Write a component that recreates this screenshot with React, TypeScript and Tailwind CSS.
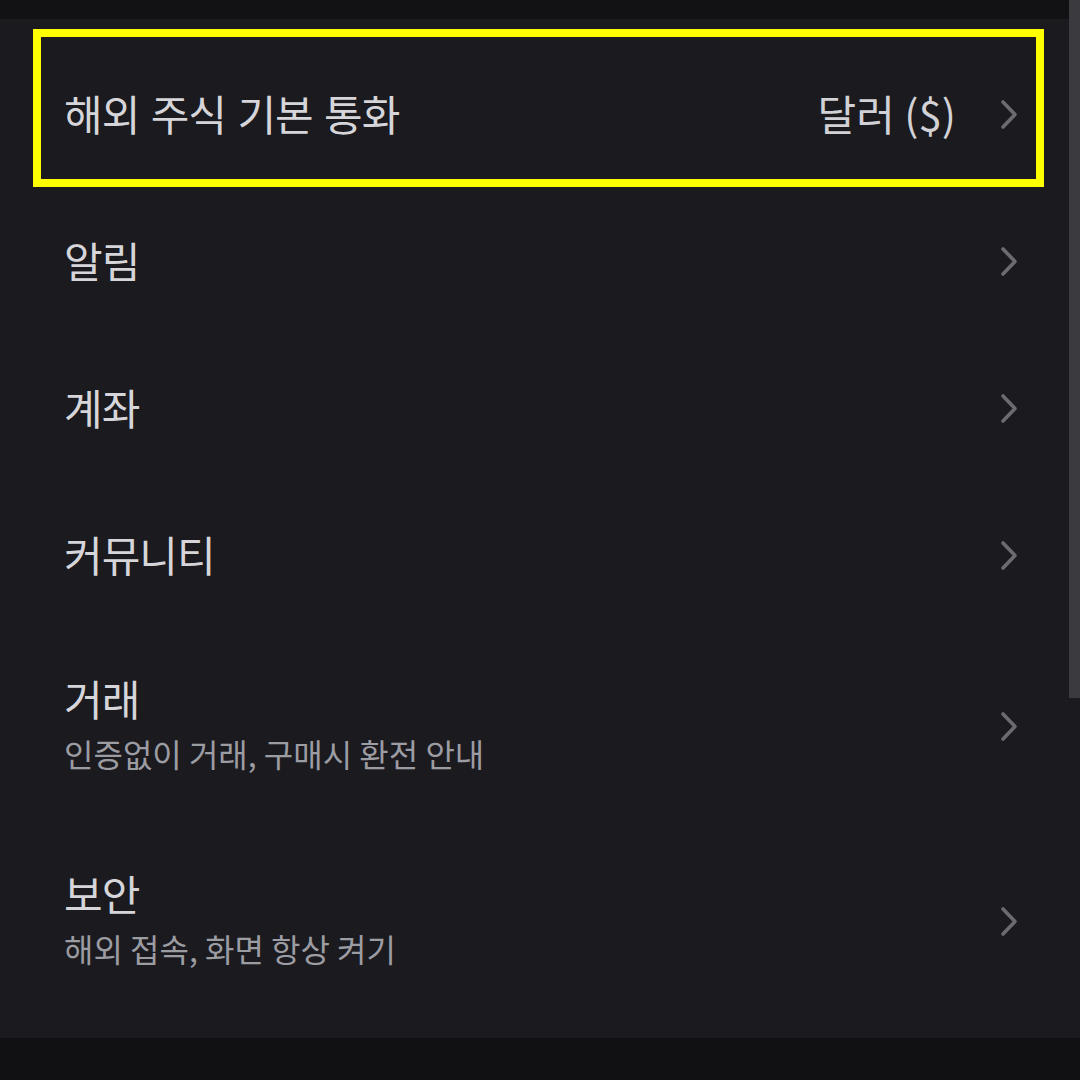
import React from 'react';

type Row = { title: string; value?: string; sub?: string };

const rows: Row[] = [
  { title: '해외 주식 기본 통화', value: '달러 ($)' },
  { title: '알림' },
  { title: '계좌' },
  { title: '커뮤니티' },
  { title: '거래', sub: '인증없이 거래, 구매시 환전 안내' },
  { title: '보안', sub: '해외 접속, 화면 항상 켜기' },
];

const Chevron = () => (
  <svg width="18" height="31" viewBox="0 0 18 31" fill="none" className="shrink-0">
    <path
      d="M3 3 L15 15.5 L3 28"
      stroke="#6b6b72"
      strokeWidth="3.6"
      strokeLinecap="round"
      strokeLinejoin="round"
    />
  </svg>
);

const App = () => {
  return (
    <div
      className="relative w-[1080px] h-[1080px] overflow-hidden bg-[#1a1a1f] flex flex-col"
      style={{ fontFamily: '"Noto Sans CJK KR", "Noto Sans", sans-serif' }}
    >
      <div className="h-[19px] bg-[#121215] shrink-0" />

      <div className="flex-1 pt-[22px] flex flex-col">
        {rows.map((row, i) => (
          <div
            key={i}
            className={`flex items-center pl-[64px] pr-[62px] ${row.sub ? 'h-[195px]' : 'h-[147px]'}`}
          >
            <div className={`flex-1 flex flex-col ${row.sub ? 'pb-[8px]' : 'pb-[4px]'}`}>
              <span className="text-[42px] leading-none tracking-[-1px] [word-spacing:3px] text-[#d6d6da]">
                {row.title}
              </span>
              {row.sub && (
                <span className="mt-[18px] text-[32px] leading-none text-[#9c9ca3]">
                  {row.sub}
                </span>
              )}
            </div>
            {row.value && (
              <span className="mr-[44px] pb-[4px] text-[42px] leading-none text-[#d2d2d6]">
                {row.value}
              </span>
            )}
            <Chevron />
          </div>
        ))}
      </div>

      <div className="h-[42px] bg-[#111113] shrink-0" />

      {/* scrollbar */}
      <div className="absolute right-0 top-0 w-[11px] h-[698px] bg-[#3a3a3f]" />

      {/* highlight box */}
      <div className="absolute left-[33px] top-[29px] w-[1011px] h-[158px] border-[8px] border-[#ffff00]" />
    </div>
  );
};

export default App;
